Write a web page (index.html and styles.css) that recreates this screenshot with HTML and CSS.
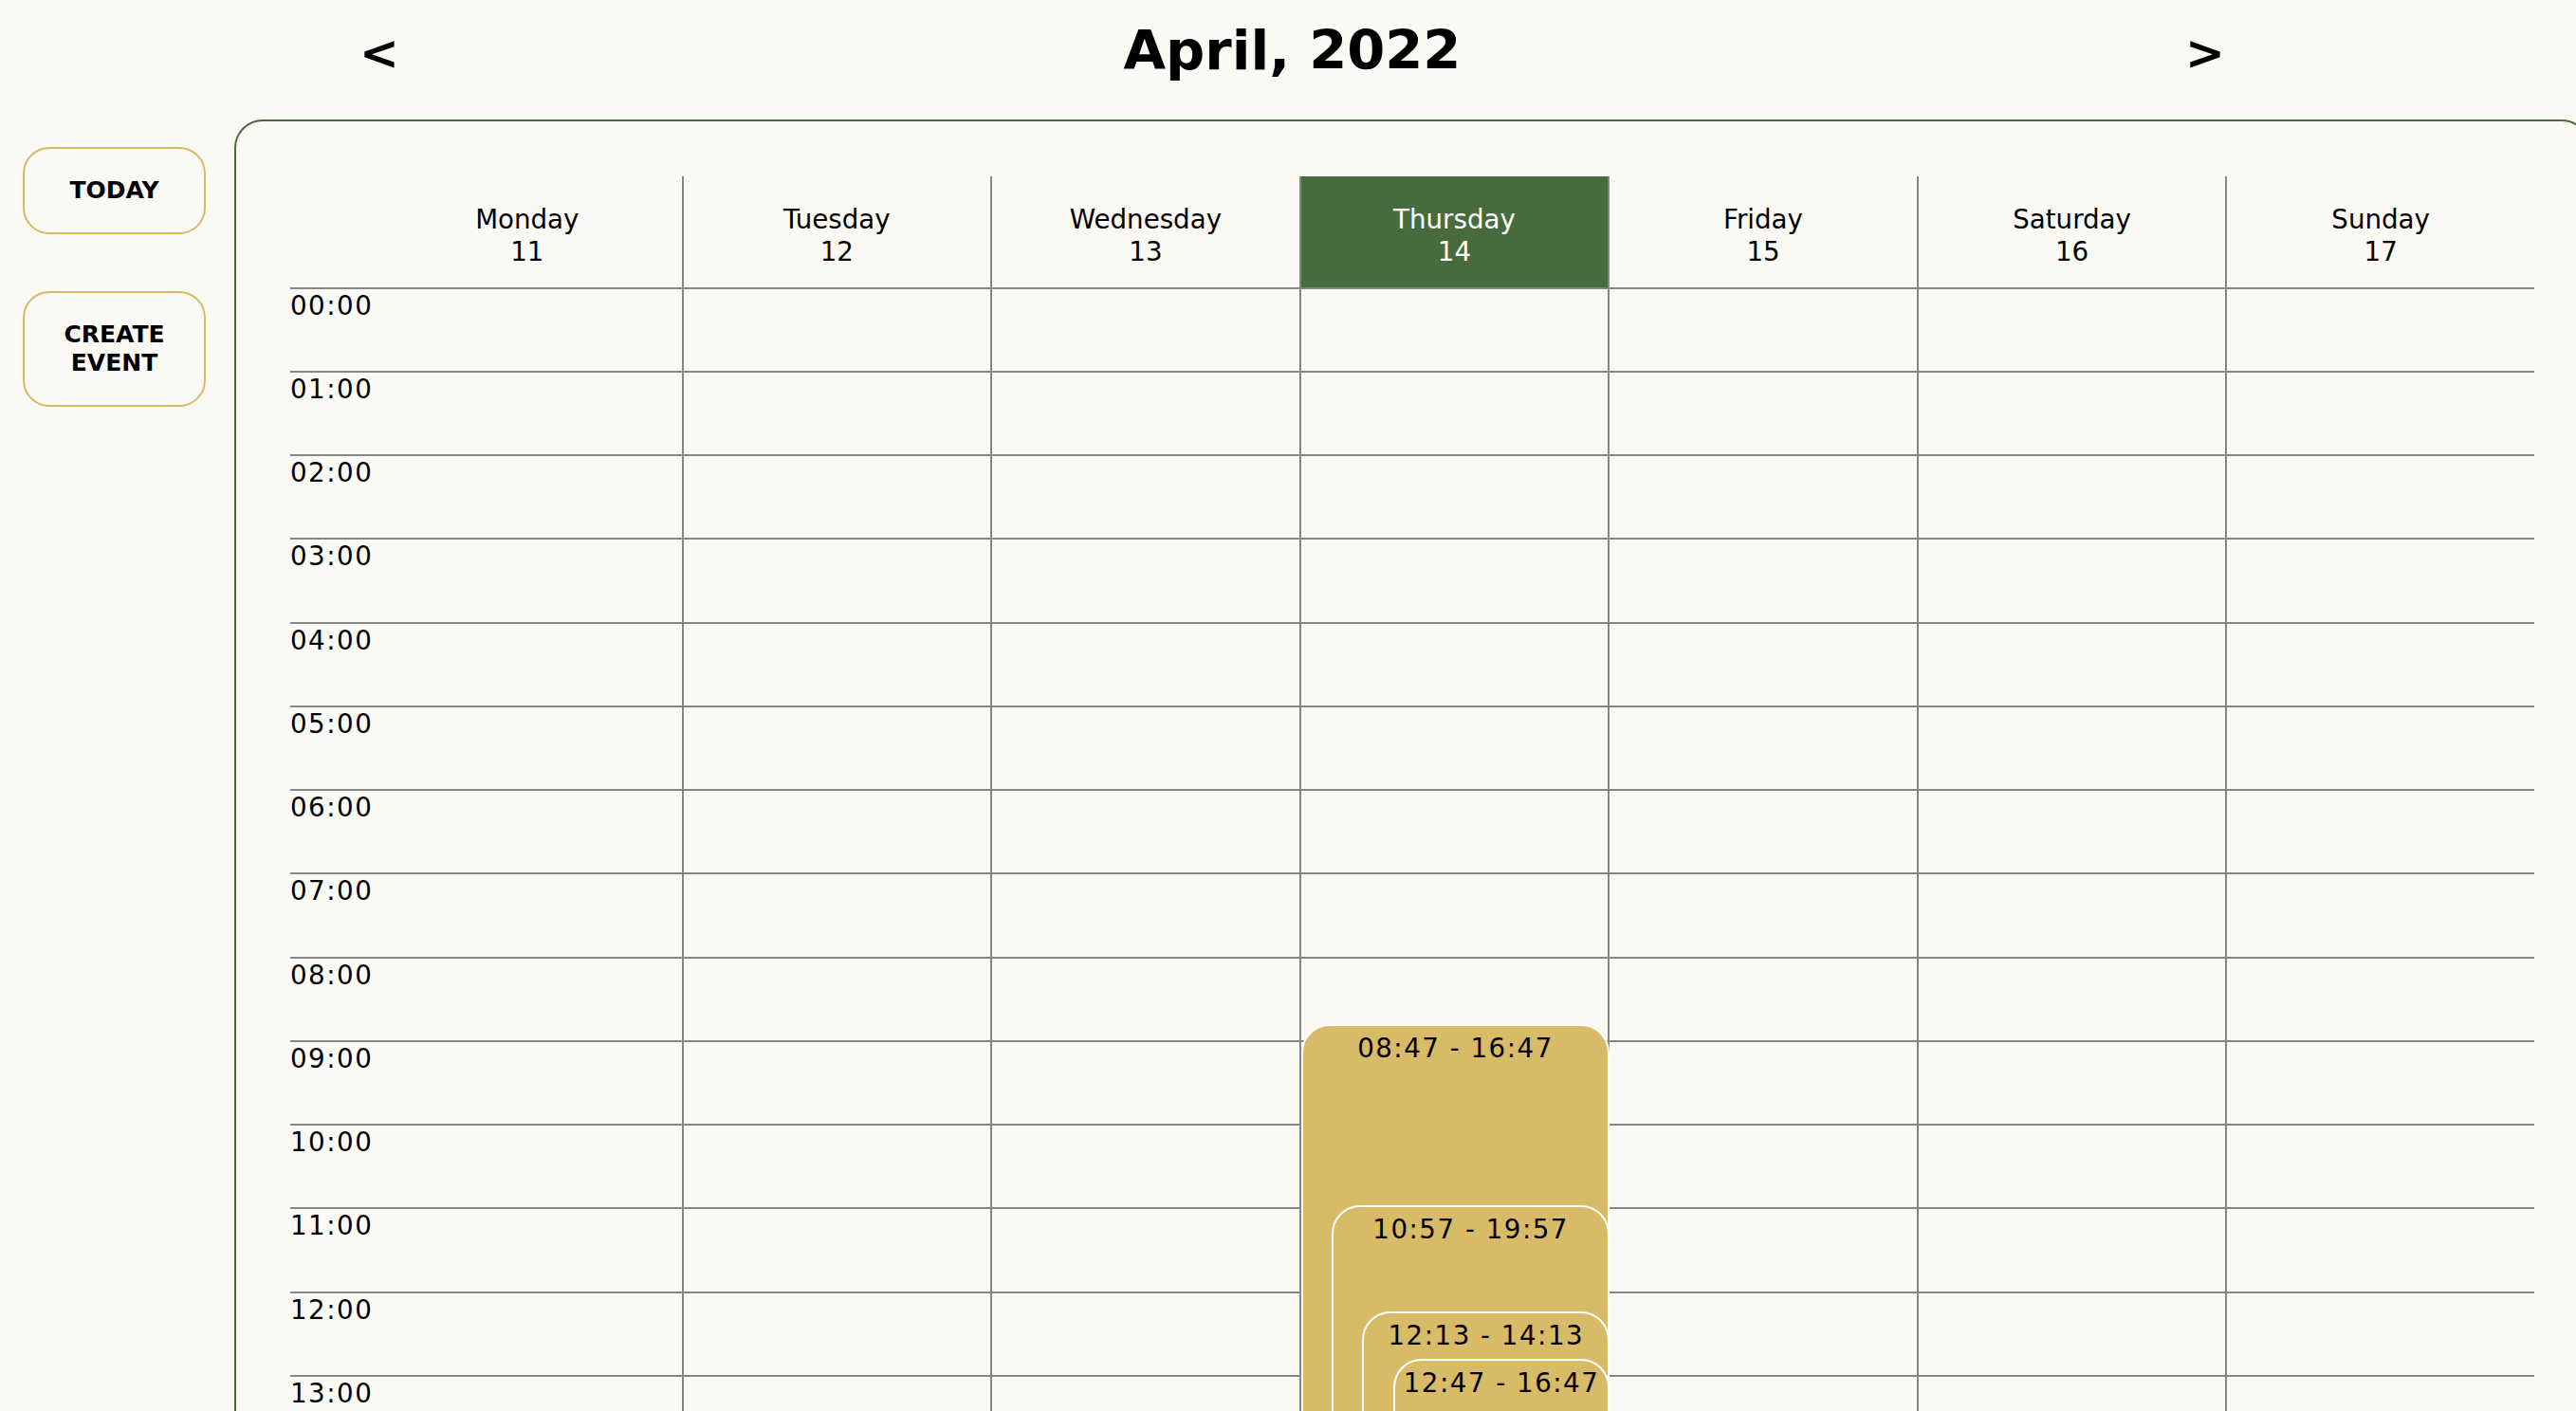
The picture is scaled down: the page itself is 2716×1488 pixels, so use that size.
FILE: index.html
```html
<!DOCTYPE html>
<html lang="en">
<head>
<meta charset="utf-8">
<title>Calendar - April, 2022</title>
<link rel="stylesheet" href="styles.css">
</head>
<body>
<header class="topbar">
  <button class="nav" type="button">&lt;</button>
  <h1 class="title">April, 2022</h1>
  <button class="nav" type="button">&gt;</button>
</header>
<div class="layout">
  <aside class="sidebar">
    <button class="btn" type="button">TODAY</button>
    <button class="btn" type="button">CREATE<br>EVENT</button>
  </aside>
  <main class="panel">
    <div class="cal">
      <div class="row head">
        <div class="dh"></div>
        <div class="dh"><span>Monday</span><span>11</span></div>
        <div class="dh"><span>Tuesday</span><span>12</span></div>
        <div class="dh"><span>Wednesday</span><span>13</span></div>
        <div class="dh today"><span>Thursday</span><span>14</span></div>
        <div class="dh"><span>Friday</span><span>15</span></div>
        <div class="dh"><span>Saturday</span><span>16</span></div>
        <div class="dh"><span>Sunday</span><span>17</span></div>
      </div>
      <div class="row hour"><div class="cell time">00:00</div><div class="cell"></div><div class="cell"></div><div class="cell"></div>
        <div class="cell events">
          <div class="ev" style="top:775.1px;height:706px;left:0%">08:47 - 16:47</div>
          <div class="ev" style="top:966.3px;height:794.3px;left:10%">10:57 - 19:57</div>
          <div class="ev" style="top:1078.1px;height:176.5px;left:20%">12:13 - 14:13</div>
          <div class="ev" style="top:1128.1px;height:353px;left:30%">12:47 - 16:47</div>
        </div>
        <div class="cell"></div><div class="cell"></div><div class="cell"></div></div>
      <div class="row hour"><div class="cell time">01:00</div><div class="cell"></div><div class="cell"></div><div class="cell"></div><div class="cell"></div><div class="cell"></div><div class="cell"></div><div class="cell"></div></div>
      <div class="row hour"><div class="cell time">02:00</div><div class="cell"></div><div class="cell"></div><div class="cell"></div><div class="cell"></div><div class="cell"></div><div class="cell"></div><div class="cell"></div></div>
      <div class="row hour"><div class="cell time">03:00</div><div class="cell"></div><div class="cell"></div><div class="cell"></div><div class="cell"></div><div class="cell"></div><div class="cell"></div><div class="cell"></div></div>
      <div class="row hour"><div class="cell time">04:00</div><div class="cell"></div><div class="cell"></div><div class="cell"></div><div class="cell"></div><div class="cell"></div><div class="cell"></div><div class="cell"></div></div>
      <div class="row hour"><div class="cell time">05:00</div><div class="cell"></div><div class="cell"></div><div class="cell"></div><div class="cell"></div><div class="cell"></div><div class="cell"></div><div class="cell"></div></div>
      <div class="row hour"><div class="cell time">06:00</div><div class="cell"></div><div class="cell"></div><div class="cell"></div><div class="cell"></div><div class="cell"></div><div class="cell"></div><div class="cell"></div></div>
      <div class="row hour"><div class="cell time">07:00</div><div class="cell"></div><div class="cell"></div><div class="cell"></div><div class="cell"></div><div class="cell"></div><div class="cell"></div><div class="cell"></div></div>
      <div class="row hour"><div class="cell time">08:00</div><div class="cell"></div><div class="cell"></div><div class="cell"></div><div class="cell"></div><div class="cell"></div><div class="cell"></div><div class="cell"></div></div>
      <div class="row hour"><div class="cell time">09:00</div><div class="cell"></div><div class="cell"></div><div class="cell"></div><div class="cell"></div><div class="cell"></div><div class="cell"></div><div class="cell"></div></div>
      <div class="row hour"><div class="cell time">10:00</div><div class="cell"></div><div class="cell"></div><div class="cell"></div><div class="cell"></div><div class="cell"></div><div class="cell"></div><div class="cell"></div></div>
      <div class="row hour"><div class="cell time">11:00</div><div class="cell"></div><div class="cell"></div><div class="cell"></div><div class="cell"></div><div class="cell"></div><div class="cell"></div><div class="cell"></div></div>
      <div class="row hour"><div class="cell time">12:00</div><div class="cell"></div><div class="cell"></div><div class="cell"></div><div class="cell"></div><div class="cell"></div><div class="cell"></div><div class="cell"></div></div>
      <div class="row hour"><div class="cell time">13:00</div><div class="cell"></div><div class="cell"></div><div class="cell"></div><div class="cell"></div><div class="cell"></div><div class="cell"></div><div class="cell"></div></div>
      <div class="row hour"><div class="cell time">14:00</div><div class="cell"></div><div class="cell"></div><div class="cell"></div><div class="cell"></div><div class="cell"></div><div class="cell"></div><div class="cell"></div></div>
      <div class="row hour"><div class="cell time">15:00</div><div class="cell"></div><div class="cell"></div><div class="cell"></div><div class="cell"></div><div class="cell"></div><div class="cell"></div><div class="cell"></div></div>
      <div class="row hour"><div class="cell time">16:00</div><div class="cell"></div><div class="cell"></div><div class="cell"></div><div class="cell"></div><div class="cell"></div><div class="cell"></div><div class="cell"></div></div>
      <div class="row hour"><div class="cell time">17:00</div><div class="cell"></div><div class="cell"></div><div class="cell"></div><div class="cell"></div><div class="cell"></div><div class="cell"></div><div class="cell"></div></div>
      <div class="row hour"><div class="cell time">18:00</div><div class="cell"></div><div class="cell"></div><div class="cell"></div><div class="cell"></div><div class="cell"></div><div class="cell"></div><div class="cell"></div></div>
      <div class="row hour"><div class="cell time">19:00</div><div class="cell"></div><div class="cell"></div><div class="cell"></div><div class="cell"></div><div class="cell"></div><div class="cell"></div><div class="cell"></div></div>
      <div class="row hour"><div class="cell time">20:00</div><div class="cell"></div><div class="cell"></div><div class="cell"></div><div class="cell"></div><div class="cell"></div><div class="cell"></div><div class="cell"></div></div>
      <div class="row hour"><div class="cell time">21:00</div><div class="cell"></div><div class="cell"></div><div class="cell"></div><div class="cell"></div><div class="cell"></div><div class="cell"></div><div class="cell"></div></div>
      <div class="row hour"><div class="cell time">22:00</div><div class="cell"></div><div class="cell"></div><div class="cell"></div><div class="cell"></div><div class="cell"></div><div class="cell"></div><div class="cell"></div></div>
      <div class="row hour"><div class="cell time">23:00</div><div class="cell"></div><div class="cell"></div><div class="cell"></div><div class="cell"></div><div class="cell"></div><div class="cell"></div><div class="cell"></div></div>
    </div>
  </main>
</div>
</body>
</html>
```

FILE: styles.css
```css
* {
  box-sizing: border-box;
}

html,
body {
  margin: 0;
  height: 100%;
  overflow: hidden;
}

body {
  background: #faf9f4;
  color: #000;
  font-family: "DejaVu Sans", Verdana, sans-serif;
}

/* ---------- top bar ---------- */
.topbar {
  display: flex;
  justify-content: space-between;
  align-items: baseline;
  height: 126px;
  padding: 20px 370px 0 379px;
}

.nav {
  width: 42px;
  padding: 0;
  border: 0;
  background: none;
  color: #000;
  font-family: "DejaVu Sans", Verdana, sans-serif;
  font-size: 50px;
  font-weight: bold;
  line-height: normal;
  text-align: center;
}

.title {
  margin: 0;
  font-size: 57.6px;
  font-weight: bold;
  line-height: normal;
}

/* ---------- layout ---------- */
.layout {
  display: flex;
  align-items: flex-start;
}

.sidebar {
  flex: none;
  width: 247px;
  padding: 29px 0 0 24px;
  display: flex;
  flex-direction: column;
  align-items: flex-start;
  gap: 60px;
}

.btn {
  width: 193px;
  padding: 29px 0;
  border: 2px solid #dbb862;
  border-radius: 28px;
  background: transparent;
  color: #000;
  font-family: "DejaVu Sans", Verdana, sans-serif;
  font-size: 25px;
  font-weight: bold;
  line-height: 30px;
  text-align: center;
}

.panel {
  flex: none;
  padding: 58px 57px;
  border: 2px solid #486b3d;
  border-radius: 30px;
}

/* ---------- calendar grid ---------- */
.cal {
  display: grid;
  grid-template-columns: 87px repeat(7, 325.57px);
  grid-template-rows: 116.5px;
  grid-auto-rows: 88.25px;
  font-size: 27.7px;
  line-height: 34px;
}

.row {
  display: contents;
}

.row > :nth-child(n+3) {
  border-left: 2px solid #858585;
}

.dh {
  padding-top: 29.4px;
  text-align: center;
}

.dh span {
  display: block;
}

.dh.today {
  background: #486b3d;
  color: #fff;
}

.hour > .cell {
  border-top: 2px solid #858585;
}

.time {
  padding-top: 1px;
  letter-spacing: 1.5px;
}

.events {
  position: relative;
}

.ev {
  position: absolute;
  right: -2px;
  padding-top: 7.5px;
  border: 2px solid #fff;
  border-radius: 30px;
  background: #d8bb67;
  text-align: center;
  letter-spacing: 1.5px;
}
```
